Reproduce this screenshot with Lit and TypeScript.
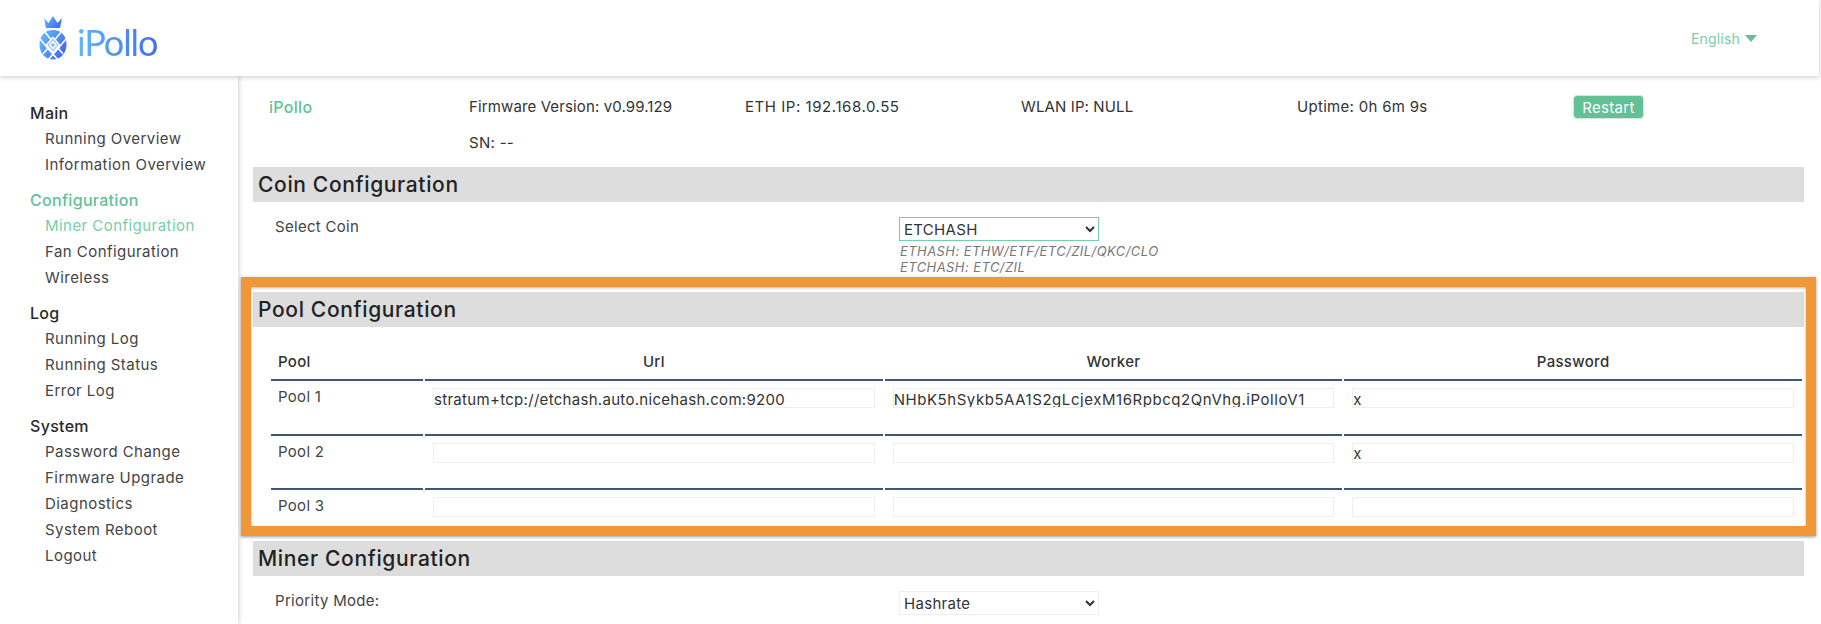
import { LitElement, html, css, svg } from "lit";
import { customElement } from "lit/decorators.js";

const NAV = [
  { title: "Main", items: ["Running Overview", "Information Overview"] },
  { title: "Configuration", active: true, items: ["Miner Configuration", "Fan Configuration", "Wireless"] },
  { title: "Log", items: ["Running Log", "Running Status", "Error Log"] },
  { title: "System", items: ["Password Change", "Firmware Upgrade", "Diagnostics", "System Reboot", "Logout"] },
];

const POOLS = [
  { name: "Pool 1", url: "stratum+tcp://etchash.auto.nicehash.com:9200", worker: "NHbK5hSykb5AA1S2gLcjexM16Rpbcq2QnVhg.iPolloV1", pass: "x" },
  { name: "Pool 2", url: "", worker: "", pass: "x" },
  { name: "Pool 3", url: "", worker: "", pass: "" },
];

const logo = svg`<svg class="mark" viewBox="0 0 28 44" width="28" height="44" aria-hidden="true">
  <defs>
    <linearGradient id="pg" x1="0" y1="0" x2="1" y2="0.6">
      <stop offset="0" stop-color="#6cc0fb"/><stop offset="1" stop-color="#3f6df0"/>
    </linearGradient>
  </defs>
  <path d="M5 2 L9.5 7 L14 0 L18.5 7 L23 2 L21 12 L7 12 Z" fill="url(#pg)"/>
  <path d="M14 14 C22 14 27.5 19.5 27.5 28.5 C27.5 38 21 43.5 14 43.5 C7 43.5 .5 38 .5 28.5 C.5 19.5 6 14 14 14 Z" fill="url(#pg)"/>
  <g stroke="#fff" stroke-width="1.6" fill="none">
    <path d="M5 15 L24 38 M23 15 L4 38 M1 23 L12 36 M27 23 L16 36 M9 44 L20 31 M19 44 L8 31"/>
    <path d="M14 21.5 L20.5 29 L14 36.5 L7.5 29 Z" fill="#8db8f8"/>
    <path d="M14 25.5 L17.2 29 L14 32.5 L10.8 29 Z"/>
  </g>
</svg>`;

@customElement("app-root")
export class AppRoot extends LitElement {
  static styles = css`
    :host {
      display: block;
      position: relative;
      height: 624px;
      overflow: hidden;
      background: #fff;
      color: #333;
      font-family: Inter, "Liberation Sans", sans-serif;
      font-size: 15px;
      letter-spacing: 0.3px;
    }
    header {
      position: relative;
      z-index: 2;
      height: 76px;
      margin-right: 2px;
      display: flex;
      align-items: center;
      justify-content: space-between;
      padding: 0 62px 0 39px;
      background: #fff;
      box-shadow: 0 1px 5px rgba(0, 0, 0, 0.22);
    }
    .brand { display: flex; align-items: center; gap: 10px; }
    .mark { display: block; }
    .word {
      font-family: Lato, Inter, sans-serif;
      font-size: 36px;
      line-height: 44px;
      letter-spacing: -1.1px;
      background: linear-gradient(90deg, #62b8fa, #3f6df0);
      -webkit-background-clip: text;
      background-clip: text;
      color: transparent;
      margin-top: 8px;
    }
    .lang {
      display: flex;
      align-items: center;
      gap: 5px;
      color: #75cfa8;
      font-size: 14px;
      letter-spacing: 0.2px;
    }
    .caret {
      width: 0; height: 0;
      border-left: 6px solid transparent;
      border-right: 6px solid transparent;
      border-top: 7px solid #62c196;
    }
    .body { display: flex; height: 548px; }
    nav {
      width: 238px;
      flex: none;
      box-sizing: border-box;
      padding: 24px 0 0 30px;
      box-shadow: 1px 0 5px rgba(0, 0, 0, 0.18);
      position: relative;
      z-index: 1;
    }
    .group { margin-bottom: 9px; }
    .gt {
      font-size: 16px;
      font-weight: 500;
      line-height: 26px;
      color: #2a2a2a;
    }
    .active .gt { color: #62c196; }
    .it {
      font-size: 15px;
      letter-spacing: 0.45px;
      line-height: 26px;
      padding-left: 15px;
      color: #444;
    }
    .active .gt + .it { color: #75cfa8; }
    main {
      flex: 1;
      min-width: 0;
      padding: 13px 17px 0 15px;
    }
    .info {
      display: grid;
      grid-template-columns: 200px repeat(5, 276px);
      padding-left: 16px;
      row-gap: 12px;
      height: 72px;
      align-content: start;
      margin-top: 6px;
    }
    .info > * { height: 24px; line-height: 24px; }
    .name { color: #62c196; font-size: 16px; font-weight: 500; }
    .sn { grid-column: 2; }
    .tight { letter-spacing: 0.12px; }
    .loose { letter-spacing: 0.55px; }
    button {
      width: 71px;
      height: 24px;
      display: block;
      border: 1px solid #d7e6df;
      border-radius: 4px;
      background: #62c196;
      color: #fff;
      font: inherit;
      letter-spacing: inherit;
      padding: 0;
    }
    .sec {
      height: 35px;
      line-height: 35px;
      padding-left: 5px;
      background: #ddd;
      color: #222;
      font-size: 21px;
      letter-spacing: 0.65px;
      font-weight: 500;
    }
    .row {
      display: grid;
      grid-template-columns: 624px 1fr;
      padding: 15px 0 0 22px;
    }
    .row label { line-height: 20px; color: #444; }
    .coin { height: 90px; box-sizing: border-box; }
    select {
      display: block;
      width: 200px;
      height: 24px;
      box-sizing: border-box;
      font: inherit;
      letter-spacing: inherit;
      color: #333;
      background: #fff;
      border: 1px solid #eee;
      padding: 0;
      outline: none;
    }
    select.on { border-color: #75cfa8; }
    .hint {
      font-size: 13px;
      letter-spacing: 0.43px;
      line-height: 15.5px;
      font-style: italic;
      color: #777;
      margin: 3px 0 0 1px;
    }
    .pool { height: 214px; box-sizing: border-box; padding: 14px 0 0 16px; }
    table {
      border-collapse: separate;
      border-spacing: 2px;
      table-layout: fixed;
      width: 1535px;
    }
    th {
      height: 36px;
      padding: 0;
      font-weight: 500;
      color: #333;
      border-bottom: 2px solid #3f5674;
    }
    th:first-child, td:first-child { text-align: left; padding-left: 7px; }
    td {
      height: 52.5px;
      padding: 5px 8px 0;
      vertical-align: top;
      box-sizing: border-box;
      border-bottom: 2px solid #3f5674;
    }
    tr:last-child td { border-bottom: 0; height: 34px; }
    td:first-child { line-height: 22px; color: #444; padding-top: 3px; }
    td input {
      display: block;
      box-sizing: border-box;
      width: 100%;
      height: 20px;
      border: 1px solid #eee;
      padding: 2px 0 0 0;
      font: inherit;
      letter-spacing: 0.3px;
      color: #333;
      outline: none;
    }
    td input.worker { letter-spacing: 0.55px; }
    .mark-box {
      position: absolute;
      left: 241px;
      top: 277px;
      width: 1575px;
      height: 259px;
      box-sizing: border-box;
      border: 10px solid #f09838;
      box-shadow: 0 1px 3px rgba(0, 0, 0, 0.4), inset 0 1px 3px rgba(0, 0, 0, 0.3);
      z-index: 3;
      pointer-events: none;
    }
  `;

  render() {
    return html`
      <header>
        <div class="brand">${logo}<span class="word">iPollo</span></div>
        <div class="lang">English <span class="caret"></span></div>
      </header>
      <div class="body">
        <nav>
          ${NAV.map(g => html`<div class="group ${g.active ? "active" : ""}">
            <div class="gt">${g.title}</div>
            ${g.items.map(i => html`<div class="it">${i}</div>`)}
          </div>`)}
        </nav>
        <main>
          <div class="info">
            <div class="name">iPollo</div>
            <div class="tight">Firmware Version: v0.99.129</div>
            <div class="loose">ETH IP: 192.168.0.55</div>
            <div class="tight">WLAN IP: NULL</div>
            <div>Uptime: 0h 6m 9s</div>
            <div><button>Restart</button></div>
            <div class="sn">SN: --</div>
          </div>
          <div class="sec">Coin Configuration</div>
          <div class="row coin">
            <label>Select Coin</label>
            <div>
              <select class="on"><option>ETCHASH</option></select>
              <div class="hint">ETHASH: ETHW/ETF/ETC/ZIL/QKC/CLO<br />ETCHASH: ETC/ZIL</div>
            </div>
          </div>
          <div class="sec">Pool Configuration</div>
          <div class="pool">
            <table>
              <colgroup><col style="width:152px" /><col /><col /><col /></colgroup>
              <thead><tr><th>Pool</th><th>Url</th><th>Worker</th><th>Password</th></tr></thead>
              <tbody>
                ${POOLS.map(p => html`<tr>
                  <td>${p.name}</td>
                  <td><input .value=${p.url} /></td>
                  <td><input class="worker" .value=${p.worker} /></td>
                  <td><input .value=${p.pass} /></td>
                </tr>`)}
              </tbody>
            </table>
          </div>
          <div class="sec">Miner Configuration</div>
          <div class="row">
            <label>Priority Mode:</label>
            <select><option>Hashrate</option></select>
          </div>
        </main>
      </div>
      <div class="mark-box"></div>
    `;
  }
}
